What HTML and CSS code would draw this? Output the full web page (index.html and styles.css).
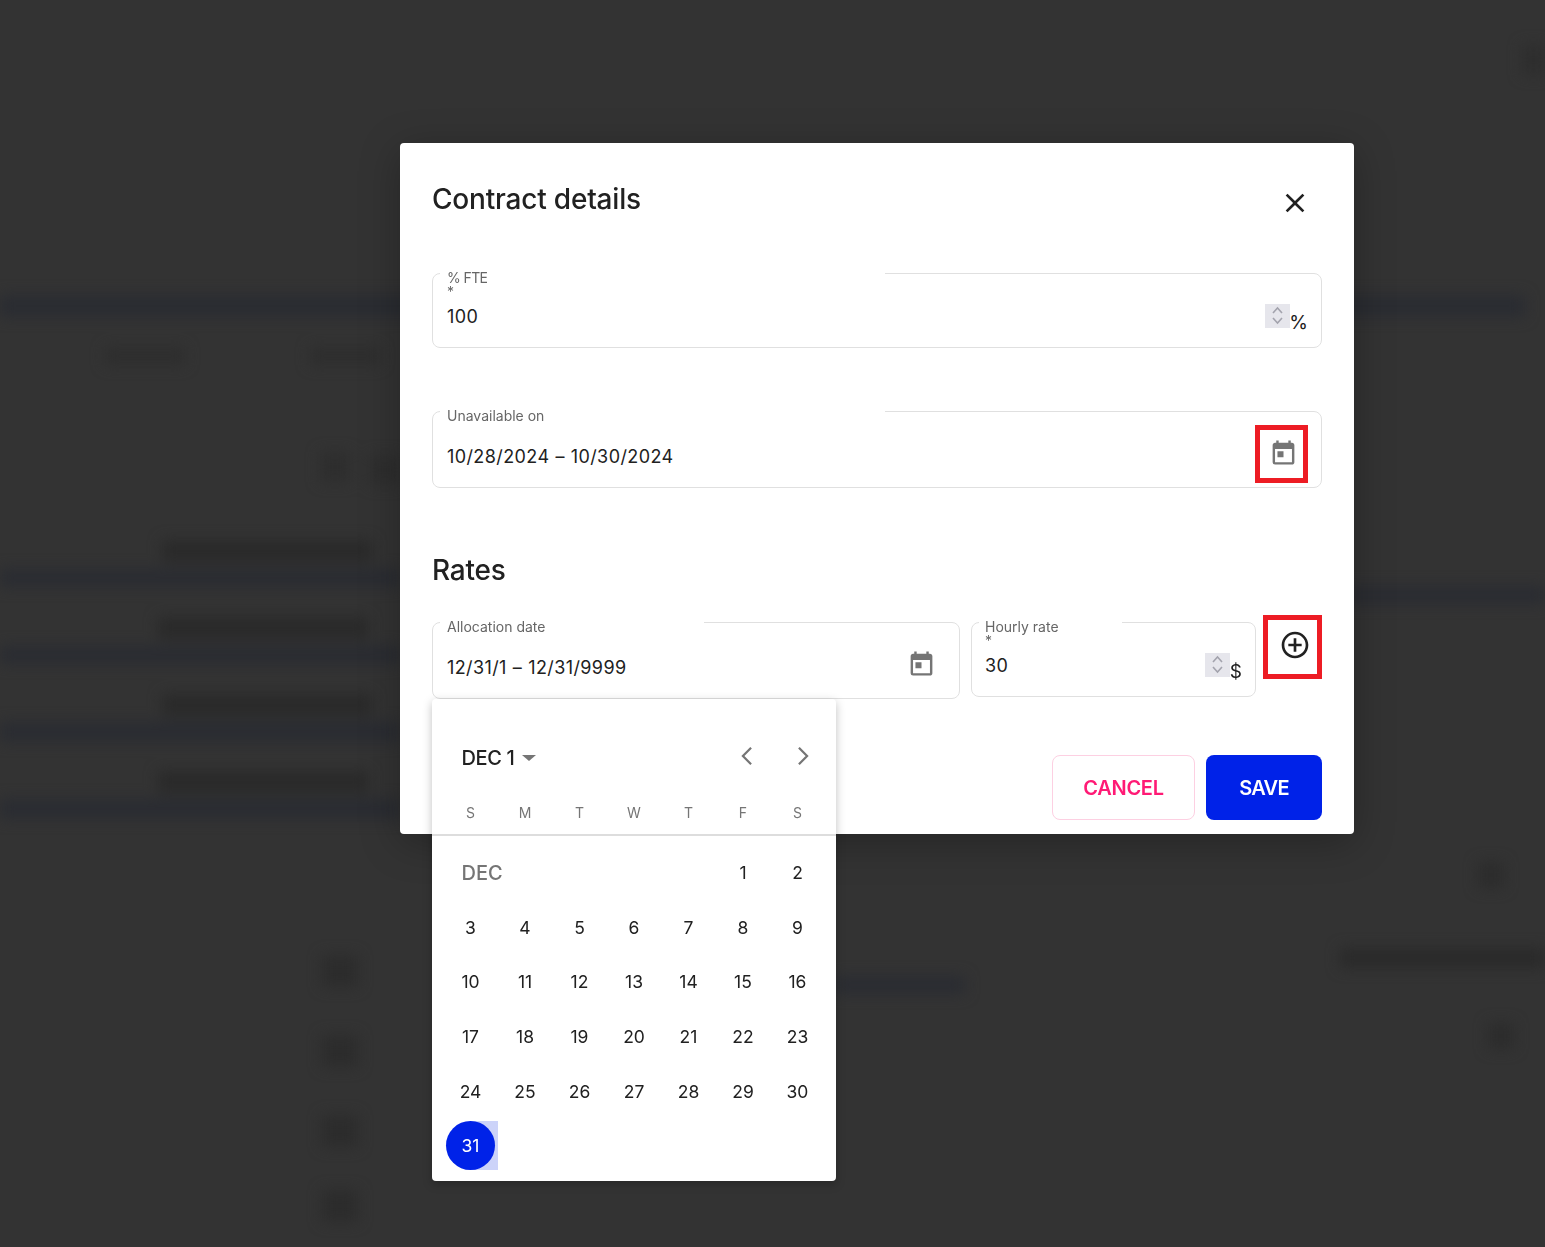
FILE: index.html
```html
<!DOCTYPE html>
<html lang="en">
<head>
    <meta charset="UTF-8">
    <title>Contract details</title>
    <link rel="stylesheet" href="styles.css">
</head>
<body>
    <div class="backdrop"></div>

    <div class="modal">
        <div class="modal-header">
            <h2 class="title">Contract details</h2>
            <svg class="icon-close" viewBox="0 0 24 24"><path d="M19 6.41 17.59 5 12 10.59 6.41 5 5 6.41 10.59 12 5 17.59 6.41 19 12 13.41 17.59 19 19 17.59 13.41 12z"/></svg>
        </div>

        <div class="field field-number field-fte">
            <span class="notch notch-wide"></span>
            <div class="label label-short">% FTE</div>
            <div class="label">*</div>
            <div class="value-row">
                <span class="value">100</span>
                <span class="spinner"><svg viewBox="0 0 25 24"><path d="M8 9l4.5-5L17 9M8 14l4.5 5L17 14"/></svg></span>
                <span class="suffix">%</span>
            </div>
        </div>

        <div class="field field-date field-unavailable">
            <span class="notch notch-wide"></span>
            <div class="label">Unavailable on</div>
            <div class="value-row value-row-date">
                <span class="value">10/28/2024 – 10/30/2024</span>
            </div>
            <div class="mark mark-calendar">
                <svg class="icon-event" viewBox="0 0 24 24"><path d="M19 4h-1V2h-2v2H8V2H6v2H5c-1.11 0-1.99.9-1.99 2L3 20a2 2 0 0 0 2 2h14c1.1 0 2-.9 2-2V6c0-1.1-.9-2-2-2zm0 16H5V9h14v11zM7 11h5v5H7z"/></svg>
            </div>
        </div>

        <h2 class="title rates-title">Rates</h2>

        <div class="rates-row">
            <div class="field field-date field-allocation">
                <span class="notch notch-allocation"></span>
                <div class="label">Allocation date</div>
                <div class="value-row value-row-date">
                    <span class="value">12/31/1 – 12/31/9999</span>
                    <svg class="icon-event icon-allocation" viewBox="0 0 24 24"><path d="M19 4h-1V2h-2v2H8V2H6v2H5c-1.11 0-1.99.9-1.99 2L3 20a2 2 0 0 0 2 2h14c1.1 0 2-.9 2-2V6c0-1.1-.9-2-2-2zm0 16H5V9h14v11zM7 11h5v5H7z"/></svg>
                </div>
            </div>

            <div class="field field-number field-rate">
                <span class="notch notch-rate"></span>
                <div class="label">Hourly rate</div>
                <div class="label">*</div>
                <div class="value-row">
                    <span class="value">30</span>
                    <span class="spinner"><svg viewBox="0 0 25 24"><path d="M8 9l4.5-5L17 9M8 14l4.5 5L17 14"/></svg></span>
                    <span class="suffix">$</span>
                </div>
            </div>

            <div class="mark-add">
                <svg class="icon-add" viewBox="0 0 24 24"><path d="M13 7h-2v4H7v2h4v4h2v-4h4v-2h-4V7zm-1-5C6.48 2 2 6.48 2 12s4.48 10 10 10 10-4.48 10-10S17.52 2 12 2zm0 18c-4.41 0-8-3.59-8-8s3.59-8 8-8 8 3.59 8 8-3.59 8-8 8z"/></svg>
            </div>
        </div>

        <div class="actions">
            <button class="btn btn-cancel">CANCEL</button>
            <button class="btn btn-save">SAVE</button>
        </div>

        <div class="calendar">
            <div class="calendar-head">
                <span class="month-pick">DEC 1</span>
                <span class="caret"></span>
                <svg class="chevron chevron-prev" viewBox="0 0 24 24"><path d="M15.5 5 8.5 12l7 7"/></svg>
                <svg class="chevron chevron-next" viewBox="0 0 24 24"><path d="M8.5 5l7 7-7 7"/></svg>
            </div>
            <div class="weekdays">
                <span>S</span><span>M</span><span>T</span><span>W</span><span>T</span><span>F</span><span>S</span>
            </div>
            <div class="days">
                <span class="month-name">DEC</span>
                <span>1</span><span>2</span>
                <span>3</span><span>4</span><span>5</span><span>6</span><span>7</span><span>8</span><span>9</span>
                <span>10</span><span>11</span><span>12</span><span>13</span><span>14</span><span>15</span><span>16</span>
                <span>17</span><span>18</span><span>19</span><span>20</span><span>21</span><span>22</span><span>23</span>
                <span>24</span><span>25</span><span>26</span><span>27</span><span>28</span><span>29</span><span>30</span>
                <span class="day-selected"><b>31</b></span>
            </div>
        </div>
    </div>
</body>
</html>
```

FILE: styles.css
```css
* {
    box-sizing: border-box;
}
html, body {
    height: 100%;
}
body {
    margin: 0;
    background: #333333;
    overflow: hidden;
    font-family: Inter, "Liberation Sans", sans-serif;
    color: #212121;
}

/* the page behind the dialog, blurred out */
.backdrop {
    position: fixed;
    inset: 0;
    filter: blur(7px);
    background-repeat: no-repeat;
    background-image:
        linear-gradient(#2a2c32, #2a2c32),
        linear-gradient(#2a2c32, #2a2c32),
        linear-gradient(#2a2c32, #2a2c32),
        linear-gradient(#2a2c32, #2a2c32),
        linear-gradient(#2a2c32, #2a2c32),
        linear-gradient(#2a2c32, #2a2c32),
        linear-gradient(#2a2c32, #2a2c32),
        linear-gradient(#2a2a2a, #2a2a2a),
        linear-gradient(#2a2a2a, #2a2a2a),
        linear-gradient(#2a2a2a, #2a2a2a),
        linear-gradient(#2a2a2a, #2a2a2a),
        linear-gradient(#2a2a2a, #2a2a2a),
        linear-gradient(#2c2c2c, #2c2c2c),
        linear-gradient(#2c2c2c, #2c2c2c),
        linear-gradient(#2c2c2c, #2c2c2c),
        linear-gradient(#2c2c2c, #2c2c2c),
        linear-gradient(#2c2c2c, #2c2c2c),
        linear-gradient(#2c2c2c, #2c2c2c),
        linear-gradient(#2e2e2e, #2e2e2e),
        linear-gradient(#2e2e2e, #2e2e2e),
        linear-gradient(#2e2e2e, #2e2e2e),
        linear-gradient(#2e2e2e, #2e2e2e),
        linear-gradient(#2e2e2e, #2e2e2e);
    background-size:
        1525px 22px, 400px 18px, 200px 18px, 400px 18px, 400px 20px, 400px 20px, 130px 18px,
        210px 22px, 210px 22px, 210px 22px, 210px 22px, 210px 20px,
        36px 32px, 36px 32px, 36px 32px, 36px 32px, 26px 26px, 26px 26px,
        80px 18px, 70px 18px, 30px 30px, 30px 30px, 24px 30px;
    background-position:
        0 295px, 0 569px, 1345px 586px, 0 646px, 0 722px, 0 799px, 835px 976px,
        162px 540px, 158px 617px, 162px 694px, 158px 771px, 1340px 948px,
        322px 955px, 322px 1035px, 322px 1115px, 322px 1190px, 1478px 862px, 1488px 1023px,
        105px 347px, 310px 347px, 320px 452px, 370px 455px, 1522px 45px;
}

.modal {
    position: absolute;
    left: 400px;
    top: 143px;
    width: 954px;
    padding: 36px 32px 14px;
    background: #fff;
    border-radius: 4px;
    box-shadow: 0 8px 40px rgba(0, 0, 0, 0.28);
}
.modal-header {
    display: flex;
    justify-content: space-between;
    height: 40px;
}
.title {
    margin: 0;
    font-size: 28px;
    font-weight: 500;
    line-height: 40px;
    letter-spacing: -0.2px;
}
.icon-close {
    width: 32px;
    height: 32px;
    margin-top: 8px;
    margin-right: 11.5px;
    fill: #212121;
}

/* outlined fields */
.field {
    position: relative;
    border: 1px solid #e0e0e0;
    border-radius: 8px;
    padding: 0 13px 0 14px;
    background: #fff;
}
.field-number {
    height: 75px;
}
.field-date {
    height: 77px;
}
.field-fte {
    margin-top: 54px;
}
.field-unavailable {
    margin-top: 63px;
}
.notch {
    position: absolute;
    top: -2px;
    left: 7px;
    height: 4px;
    background: #fff;
}
.notch-wide {
    width: 445px;
}
.notch-allocation {
    width: 264px;
}
.notch-rate {
    width: 143px;
}
.label {
    position: relative;
    margin-top: -3px;
    margin-bottom: 3px;
    font-size: 14px;
    line-height: 14px;
    color: #666;
}
.label-short {
    letter-spacing: -0.6px;
}
.value-row {
    display: flex;
    height: 24px;
    margin-top: 6px;
    font-size: 18px;
    line-height: 24px;
    letter-spacing: 0.4px;
    word-spacing: 0.5px;
}
.value-row-date {
    margin-top: 22px;
}
.value {
    flex: 1;
}
.spinner {
    width: 25px;
    height: 24px;
    margin-top: -1px;
    background: #e6e6ec;
}
.spinner svg {
    display: block;
    width: 25px;
    height: 24px;
    fill: none;
    stroke: #a3a3ad;
    stroke-width: 1.6;
}
.suffix {
    margin-top: 6px;
    margin-left: -0.5px;
    font-size: 19px;
    letter-spacing: 0;
}
.field-rate {
    padding-left: 13px;
}
.icon-event {
    width: 29px;
    height: 29px;
    fill: #757575;
}
.icon-allocation {
    margin-top: -7.5px;
    margin-right: 10.5px;
}

/* red marks drawn over the screen */
.mark {
    position: absolute;
    top: 13px;
    right: 13px;
    display: flex;
    align-items: center;
    justify-content: center;
    width: 53px;
    height: 58px;
    padding: 0 0 4px 3px;
    border: 5px solid #ed1c24;
}
.mark-add {
    flex: none;
    width: 59px;
    height: 64px;
    margin-top: -7px;
    margin-left: -4px;
    padding: 9px 0 0 11px;
    border: 5px solid #ed1c24;
}
.icon-add {
    display: block;
    width: 32px;
    height: 32px;
    fill: #212121;
}

.rates-title {
    margin-top: 62px;
}
.rates-row {
    display: flex;
    align-items: flex-start;
    gap: 11px;
    margin-top: 32px;
}
.field-allocation {
    width: 528px;
}
.field-rate {
    width: 285px;
}

.actions {
    display: flex;
    justify-content: flex-end;
    gap: 11px;
    margin-top: 56px;
}
.btn {
    height: 65px;
    border-radius: 8px;
    font-family: inherit;
    font-size: 20px;
    font-weight: 600;
    letter-spacing: -0.3px;
}
.btn-cancel {
    width: 143px;
    background: #fff;
    border: 1px solid #fdd0e2;
    color: #ff1a75;
}
.btn-save {
    width: 116px;
    background: #0022e8;
    border: none;
    color: #fff;
    letter-spacing: -0.7px;
}

/* date picker */
.calendar {
    position: absolute;
    left: 32px;
    top: 556px;
    width: 404px;
    height: 482px;
    background: #fff;
    border-radius: 4px;
    box-shadow: 0 3px 10px rgba(0, 0, 0, 0.25);
}
.calendar-head {
    display: flex;
    align-items: center;
    height: 40px;
    padding: 39px 0 0 29.5px;
    box-sizing: content-box;
}
.month-pick {
    font-size: 20px;
    font-weight: 500;
    letter-spacing: -0.4px;
}
.caret {
    width: 0;
    height: 0;
    margin-left: 8px;
    border-left: 7px solid transparent;
    border-right: 7px solid transparent;
    border-top: 6px solid #757575;
}
.chevron {
    width: 28px;
    height: 28px;
    fill: none;
    stroke: #757575;
    stroke-width: 1.9;
}
.chevron-prev {
    margin-left: auto;
    margin-top: -4px;
}
.chevron-next {
    margin-left: 28px;
    margin-top: -4px;
    margin-right: 19px;
}
.weekdays {
    display: grid;
    grid-template-columns: repeat(7, 54.5px);
    height: 58px;
    padding: 25px 0 0 11.25px;
    border-bottom: 2px solid #ddd;
    font-size: 14px;
    line-height: 20px;
    color: #757575;
    text-align: center;
}
.days {
    display: grid;
    grid-template-columns: repeat(7, 54.5px);
    grid-auto-rows: 54.6px;
    padding: 9.5px 0 0 11.25px;
    font-size: 17.5px;
    text-align: center;
}
.days span {
    display: flex;
    align-items: center;
    justify-content: center;
}
.days .month-name {
    grid-column: span 5;
    justify-content: flex-start;
    padding-left: 18.25px;
    font-size: 20px;
    font-weight: 500;
    color: #757575;
}
.days .day-selected {
    height: 49px;
    margin-top: 2.5px;
    background: linear-gradient(90deg, transparent 50%, #ccd3f9 50%);
}
.day-selected b {
    display: flex;
    align-items: center;
    justify-content: center;
    width: 49px;
    height: 49px;
    border-radius: 50%;
    background: #0022e8;
    color: #fff;
    font-weight: 400;
}
```
